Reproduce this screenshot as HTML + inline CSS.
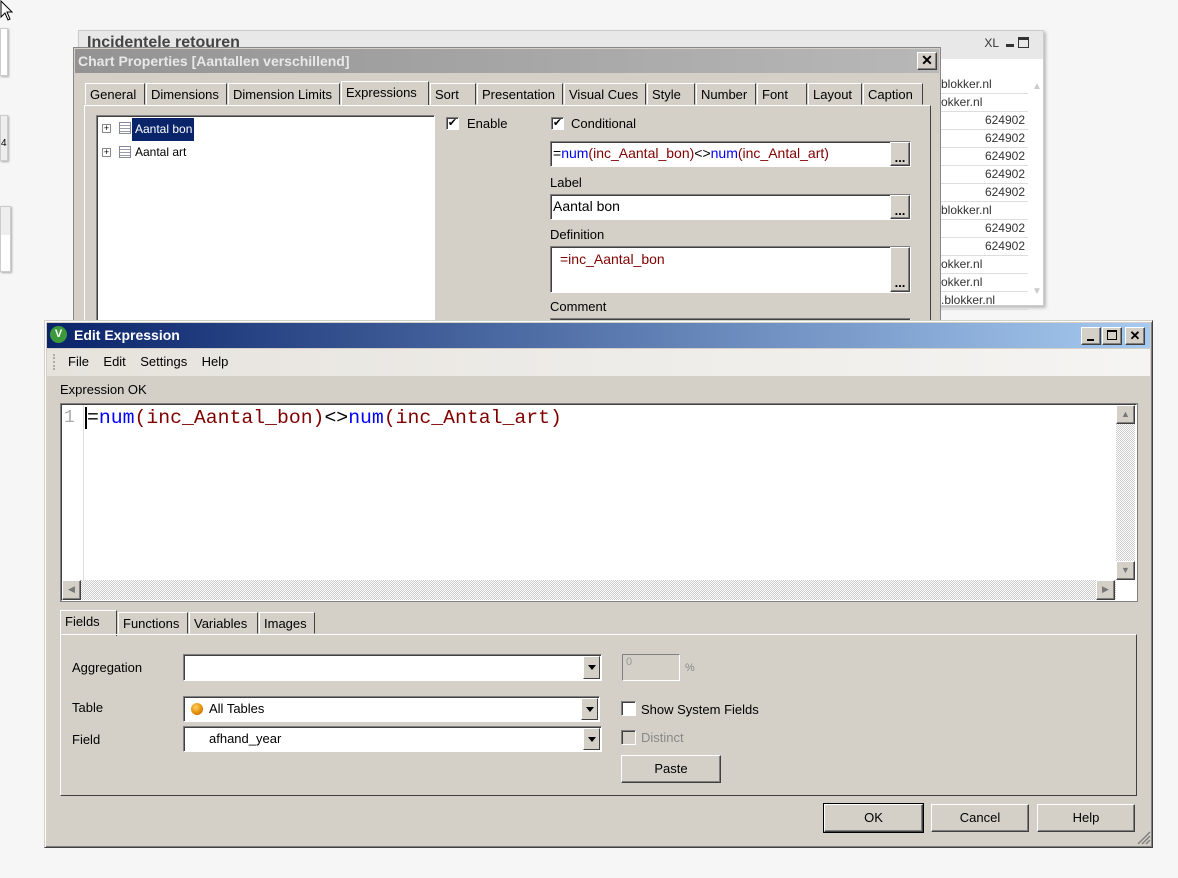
<!DOCTYPE html>
<html><head><meta charset="utf-8">
<style>
*{box-sizing:border-box;margin:0;padding:0}
body{width:1178px;height:878px;background:#f6f6f6;position:relative;overflow:hidden;font-family:"Liberation Sans",Tahoma,sans-serif;font-size:13px;color:#000}
.a{position:absolute}
.sunk{background:#fff;border:1px solid;border-color:#808080 #fff #fff #808080;box-shadow:inset 1px 1px 0 #404040}
.btn{background:#d4d0c8;border:1px solid;border-color:#fff #404040 #404040 #fff;box-shadow:inset -1px -1px 0 #808080;text-align:center}
.tab{position:absolute;top:0;height:22px;border:1px solid;border-color:#fff #404040 transparent #fff;padding:3px 4px 0;background:#d4d0c8;white-space:nowrap}
.chk{position:absolute;width:13px;height:13px;background:#fff;border:1px solid;border-color:#808080 #fff #fff #808080;box-shadow:inset 1px 1px 0 #404040;font-size:11px;line-height:11px;text-align:center}
.dd{position:absolute;right:1px;top:1px;bottom:1px;width:17px;background:#d4d0c8;border:1px solid;border-color:#fff #404040 #404040 #fff}
.dd:after{content:"";position:absolute;left:4px;top:8px;border:4px solid transparent;border-top:5px solid #000;border-bottom:0}
.blu{color:#0000ff}.red{color:#800000}
.row{height:18px;border-bottom:1px solid #ddd;font-size:12px;color:#333;line-height:17px;padding-right:3px}
</style></head><body>
<div class="a" style="left:0;top:28px;width:8px;height:48px;background:#fff;border:1px solid #ccc;box-shadow:1px 1px 2px #aaa"></div>
<div class="a" style="left:0;top:115px;width:8px;height:46px;background:#eee;border:1px solid #ccc;box-shadow:1px 1px 2px #aaa;font-size:10px">&nbsp;<br><br>4</div>
<div class="a" style="left:0;top:206px;width:11px;height:66px;background:#eee;border:1px solid #ccc;box-shadow:1px 1px 2px #aaa"><div style="margin-top:28px;height:36px;background:#fff"></div></div>
<svg class="a" style="left:0;top:0" width="14" height="22"><path d="M1 1 L1 17 L5 13 L8 20 L10 19 L7 12 L12 12 Z" fill="#fff" stroke="#000"/></svg>

<div class="a" style="left:78px;top:30px;width:966px;height:276px;background:#fff;border:1px solid #ccc;box-shadow:2px 2px 3px #bbb">
 <div style="height:28px;background:#e8e8e8;font-weight:bold;font-size:16px;color:#444;padding:3px 8px">Incidentele retouren</div>
 <div class="a" style="right:14px;top:5px;font-size:12px;color:#333">XL <span style="display:inline-block;width:8px;height:3px;background:#333;margin:0 4px"></span><span style="display:inline-block;width:11px;height:11px;border:1px solid #333;border-top-width:3px;vertical-align:-1px"></span></div>
 <div class="a" style="left:862px;top:45px;width:87px;text-align:right">
  <div class="row" style="text-align:left;padding-left:0">blokker.nl</div>
  <div class="row" style="text-align:left">okker.nl</div>
  <div class="row">624902</div><div class="row">624902</div><div class="row">624902</div><div class="row">624902</div><div class="row">624902</div>
  <div class="row" style="text-align:left">blokker.nl</div>
  <div class="row">624902</div><div class="row">624902</div>
  <div class="row" style="text-align:left">okker.nl</div>
  <div class="row" style="text-align:left">okker.nl</div>
  <div class="row" style="text-align:left">.blokker.nl</div>
 </div>
 <div class="a" style="left:953px;top:50px;color:#ccc;font-size:10px">▲</div>
 <div class="a" style="left:953px;top:255px;color:#ccc;font-size:10px">▼</div>
</div>

<div class="a" style="left:73px;top:47px;width:868px;height:290px;background:#d4d0c8;border:1px solid #888">
 <div style="margin:1px;height:24px;background:linear-gradient(90deg,#939393,#b8b8b8);color:#e8e8e8;font-weight:bold;font-size:14px;padding:4px 3px">Chart Properties [Aantallen verschillend]</div>
 <div class="btn a" style="left:843px;top:4px;width:20px;height:18px;font-weight:bold;font-size:14px;line-height:15px">✕</div>
 <div class="a" style="left:11px;top:35px;width:840px;height:23px">
  <div class="tab" style="left:0;width:60px">General</div>
  <div class="tab" style="left:61px;width:81px">Dimensions</div>
  <div class="tab" style="left:143px;width:112px">Dimension Limits</div>
  <div class="tab" style="left:256px;width:88px;top:-2px;height:25px;border-bottom:none">Expressions</div>
  <div class="tab" style="left:345px;width:46px">Sort</div>
  <div class="tab" style="left:392px;width:86px">Presentation</div>
  <div class="tab" style="left:479px;width:82px">Visual Cues</div>
  <div class="tab" style="left:562px;width:48px">Style</div>
  <div class="tab" style="left:611px;width:60px">Number</div>
  <div class="tab" style="left:672px;width:50px">Font</div>
  <div class="tab" style="left:723px;width:54px">Layout</div>
  <div class="tab" style="left:778px;width:60px">Caption</div>
 </div>
 <div class="a" style="left:10px;top:57px;width:847px;height:240px;border:1px solid;border-color:#fff #404040 transparent #fff"></div>
 <div class="a sunk" style="left:22px;top:67px;width:339px;height:220px">
  <div class="a" style="left:5px;top:8px;width:9px;height:9px;border:1px solid #888;font-size:9px;line-height:6px;text-align:center;background:#fff">+</div>
  <div class="a" style="left:22px;top:6px;width:12px;height:12px;border:1px solid #889;background:repeating-linear-gradient(#fff 0 2px,#99a 2px 3px)"></div>
  <div class="a" style="left:35px;top:2px;width:62px;height:23px;background:#0a246a;color:#fff;padding:4px 3px;font-size:12px;white-space:nowrap">Aantal bon</div>
  <div class="a" style="left:5px;top:32px;width:9px;height:9px;border:1px solid #888;font-size:9px;line-height:6px;text-align:center;background:#fff">+</div>
  <div class="a" style="left:22px;top:30px;width:12px;height:12px;border:1px solid #889;background:repeating-linear-gradient(#fff 0 2px,#99a 2px 3px)"></div>
  <div class="a" style="left:38px;top:29px;font-size:12px;white-space:nowrap">Aantal art</div>
 </div>
 <div class="chk" style="left:372px;top:69px">✔</div><div class="a" style="left:393px;top:68px">Enable</div>
 <div class="chk" style="left:477px;top:69px">✔</div><div class="a" style="left:497px;top:68px">Conditional</div>
 <div class="a sunk" style="left:476px;top:93px;width:361px;height:26px;padding:3px 2px;font-size:14px">=<span class="blu">num</span><span class="red">(inc_Aantal_bon)</span>&lt;&gt;<span class="blu">num</span><span class="red">(inc_Antal_art)</span><div class="btn a" style="right:0;top:0;width:20px;height:24px;line-height:30px;font-weight:bold;font-size:13px">...</div></div>
 <div class="a" style="left:476px;top:127px">Label</div>
 <div class="a sunk" style="left:476px;top:146px;width:361px;height:26px;padding:3px 2px;font-size:14px">Aantal bon<div class="btn a" style="right:0;top:0;width:20px;height:24px;line-height:30px;font-weight:bold;font-size:13px">...</div></div>
 <div class="a" style="left:476px;top:179px">Definition</div>
 <div class="a sunk" style="left:476px;top:198px;width:361px;height:47px;padding:4px 9px;font-size:14px" ><span class="red">=inc_Aantal_bon</span><div class="btn a" style="right:0;top:0;width:20px;height:45px;line-height:70px;font-weight:bold;font-size:13px">...</div></div>
 <div class="a" style="left:476px;top:251px">Comment</div>
 <div class="a sunk" style="left:476px;top:270px;width:361px;height:26px"></div>
</div>

<div class="a" style="left:44px;top:320px;width:1109px;height:528px;background:#d4d0c8;border:1px solid;border-color:#d4d0c8 #404040 #404040 #d4d0c8;box-shadow:inset 1px 1px 0 #fff,inset -1px -1px 0 #808080">
 <div class="a" style="left:2px;top:2px;right:2px;height:25px;background:linear-gradient(90deg,#0a246a,#a6caf0);color:#fff;font-weight:bold;font-size:14px;padding:4px 0 0 27px">Edit Expression</div>
 <div class="a" style="left:5px;top:5px;width:17px;height:17px;border-radius:50%;background:#3c9a3c;color:#fff;font-size:11px;font-weight:bold;text-align:center;line-height:17px">V</div>
 <div class="btn a" style="left:1036px;top:6px;width:20px;height:18px"><div class="a" style="left:5px;top:11px;width:7px;height:2px;background:#000"></div></div>
 <div class="btn a" style="left:1057px;top:6px;width:20px;height:18px"><div class="a" style="left:4px;top:2px;width:10px;height:10px;border:1px solid #000;border-top-width:2px"></div></div>
 <div class="btn a" style="left:1080px;top:6px;width:20px;height:18px;font-weight:bold;line-height:15px">✕</div>
 <div class="a" style="left:2px;top:28px;right:2px;height:27px;background:linear-gradient(90deg,#e6e3dd,#f5f4f2);padding:5px 0 0 21px">File&nbsp;&nbsp;&nbsp; Edit&nbsp;&nbsp;&nbsp; Settings&nbsp;&nbsp;&nbsp; Help</div>
 <div class="a" style="left:8px;top:33px;width:2px;height:16px;border-left:2px dotted #aaa"></div>
 <div class="a" style="left:15px;top:61px;font-size:13px">Expression OK</div>
 <div class="a" style="left:16px;top:83px;width:1076px;height:197px;background:#fff;border:1px solid;border-color:#404040 #fff #fff #404040;outline:1px solid #808080">
  <div class="a" style="left:0;top:0;width:22px;height:175px;border-right:1px solid #ddd;color:#aaa;font-family:'Liberation Mono',monospace;font-size:18px;padding:3px 0 0 2px">1</div>
  <div class="a" style="left:23px;top:2px;font-family:'Liberation Mono',monospace;font-size:19.8px;white-space:pre"><span style="border-left:2px solid #000">=</span><span class="blu">num</span><span class="red">(inc_Aantal_bon)</span>&lt;&gt;<span class="blu">num</span><span class="red">(inc_Antal_art)</span></div>
  <div class="a" style="left:1054px;top:0;width:19px;height:175px;background:repeating-conic-gradient(#ccc 0 25%,#fff 0 50%) 0 0/2px 2px"></div>
  <div class="btn a" style="left:1054px;top:0;width:19px;height:19px;color:#777;font-size:9px;line-height:16px">▲</div>
  <div class="btn a" style="left:1054px;top:156px;width:19px;height:19px;color:#777;font-size:9px;line-height:16px">▼</div>
  <div class="a" style="left:0;top:175px;width:1054px;height:20px;background:repeating-conic-gradient(#ccc 0 25%,#fff 0 50%) 0 0/2px 2px"></div>
  <div class="btn a" style="left:0;top:175px;width:19px;height:20px;color:#777;font-size:9px;line-height:17px">◀</div>
  <div class="btn a" style="left:1034px;top:175px;width:19px;height:20px;color:#777;font-size:9px;line-height:17px">▶</div>
 </div>
 <div class="a" style="left:15px;top:291px;width:1077px;height:23px">
  <div class="tab" style="left:0;width:57px;top:-2px;height:26px;border-bottom:none">Fields</div>
  <div class="tab" style="left:58px;width:70px">Functions</div>
  <div class="tab" style="left:129px;width:69px">Variables</div>
  <div class="tab" style="left:199px;width:56px">Images</div>
 </div>
 <div class="a" style="left:15px;top:313px;width:1077px;height:162px;border:1px solid;border-color:#fff #404040 #404040 #fff"></div>
 <div class="a" style="left:27px;top:339px">Aggregation</div>
 <div class="a sunk" style="left:138px;top:333px;width:419px;height:27px"><div class="dd"></div></div>
 <div class="a" style="left:577px;top:333px;width:58px;height:27px;border:1px solid;border-color:#808080 #fff #fff #808080;color:#999;font-size:11px;padding:1px 3px">0</div>
 <div class="a" style="left:640px;top:341px;color:#888;font-size:11px">%</div>
 <div class="a" style="left:27px;top:379px">Table</div>
 <div class="a sunk" style="left:138px;top:375px;width:417px;height:26px;padding:4px 0 0 25px">All Tables<div class="a" style="left:7px;top:6px;width:12px;height:12px;border-radius:50%;background:radial-gradient(circle at 40% 35%,#ffd060,#e08800 60%,#a05000)"></div><div class="dd"></div></div>
 <div class="a" style="left:27px;top:411px">Field</div>
 <div class="a sunk" style="left:138px;top:405px;width:419px;height:26px;padding:4px 0 0 25px">afhand_year<div class="dd"></div></div>
 <div class="chk" style="left:576px;top:380px;width:15px;height:15px"></div><div class="a" style="left:596px;top:381px">Show System Fields</div>
 <div class="chk" style="left:576px;top:409px;width:15px;height:15px;background:#d4d0c8"></div><div class="a" style="left:596px;top:409px;color:#888">Distinct</div>
 <div class="btn a" style="left:576px;top:434px;width:100px;height:28px;line-height:25px">Paste</div>
 <div class="btn a" style="left:779px;top:483px;width:99px;height:28px;line-height:25px;outline:1px solid #000">OK</div>
 <div class="btn a" style="left:886px;top:483px;width:98px;height:28px;line-height:25px">Cancel</div>
 <div class="btn a" style="left:992px;top:483px;width:98px;height:28px;line-height:25px">Help</div>
 <svg class="a" style="left:1092px;top:510px" width="14" height="14"><path d="M13 1 L1 13 M13 5 L5 13 M13 9 L9 13" stroke="#808080" stroke-width="1.5"/></svg>
</div>
</body></html>
